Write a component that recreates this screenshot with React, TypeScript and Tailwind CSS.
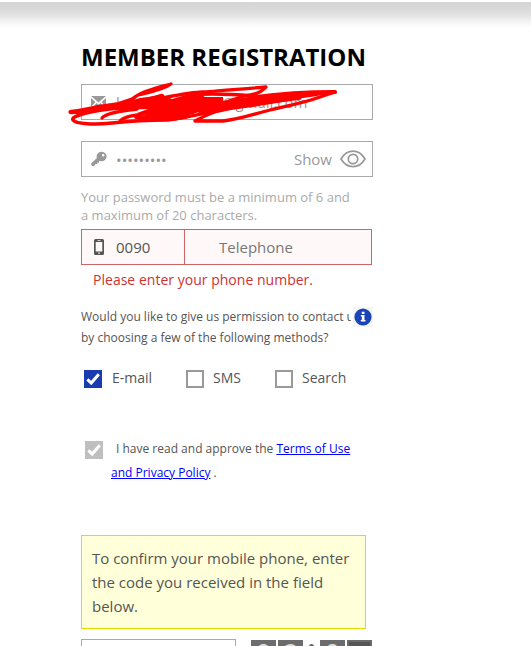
import { useState } from "react";
import type { ReactNode } from "react";

function CheckMark() {
  return (
    <svg width="18" height="18" viewBox="0 0 18 18" fill="none" className="block">
      <path d="M3.4 9.4 7.2 13 14.8 4.2" stroke="#fff" strokeWidth="3" />
    </svg>
  );
}

function KeyIcon() {
  return (
    <svg width="16" height="16" viewBox="0 0 16 16" className="block" fill="#999">
      <path
        fillRule="evenodd"
        d="M10.4 0.8a5 4.7 0 1 1-1.2 9.2L8 10.1v1.6H6.3v1.4H4.7L3.6 14.6a2 2 0 0 1-3-2.6L5.9 7A5 4.7 0 0 1 10.4.8Zm1.7 2.1a1.3 1.3 0 1 0 .1 2.6 1.3 1.3 0 0 0-.1-2.6Z"
      />
    </svg>
  );
}

function PhoneIcon() {
  return (
    <svg width="10" height="16" viewBox="0 0 10 16" className="block">
      <path
        fill="#555"
        fillRule="evenodd"
        d="M1.5 0h7A1.5 1.5 0 0 1 10 1.5v13A1.5 1.5 0 0 1 8.5 16h-7A1.5 1.5 0 0 1 0 14.5v-13A1.5 1.5 0 0 1 1.5 0ZM1.7 3v9.5h6.6V3ZM3.5 1.2v.8h3v-.8ZM4.2 13.5v1.3h1.6v-1.3Z"
      />
    </svg>
  );
}

function EyeIcon() {
  return (
    <svg width="26" height="18" viewBox="0 0 26 18" fill="none" stroke="#999" strokeWidth="1.7" className="block">
      <path d="M1 9C4 4 8 1.2 13 1.2S22 4 25 9c-3 5-7 7.6-12 7.6S4 14 1 9Z" />
      <circle cx="13" cy="9" r="4.7" />
    </svg>
  );
}

// Red marker strokes drawn over the e-mail row
function Scribble() {
  return (
    <svg
      className="pointer-events-none absolute -top-[5px] -left-[15px]"
      width="290"
      height="48"
      viewBox="67 80 290 48"
      fill="none"
      stroke="red"
      strokeWidth="3.3"
      strokeLinecap="round"
      strokeLinejoin="round"
    >
      <path
        fill="red"
        stroke="none"
        d="M106 110 122 103 140 98 163 95 172 99 196 92 205 97 223 97 224 107 205 110 193 114 174 119 150 117 137 113 148 109 125 110Z"
      />
      <path d="M70 112 96 107 117 104 132 99C142 91 156 88 171 84C163 90 150 92 138 95L130 101" />
      <path d="M71 112C88 112 103 108 116 107S143 101 162 96" strokeWidth="4.5" />
      <path d="M122 108C92 110 70 116 73 120S94 125 112 123S148 120 168 120L186 117" strokeWidth="3.6" />
      <path d="M102 118C107 112 124 111 137 109" />
      <path d="M120 121C125 116 132 116 142 114L160 110" />
      <path d="M136 117 174 118" strokeWidth="4" />
      <path d="M162 98C178 95 194 92 202 92S240 89 266 87C262 92 254 95 244 96L226 102" />
      <path d="M190 95C210 93 230 94 253 96C258 98 250 100 236 103L205 109" />
      <path d="M224 103C240 100 256 97 276 97L335 92C310 92 276 94 249 98" strokeWidth="4" />
      <path d="M335 92 312 94C280 102 262 104 240 107S212 112 195 121L223 121C240 119 254 114 270 110S304 103 320 97L335 92" />
      <path d="M200 111C224 105 262 101 316 94" strokeWidth="4.5" />
      <path d="M174 119C202 115 218 109 248 105L300 98" />
    </svg>
  );
}

function Option({
  label,
  checked,
  onToggle,
  className,
}: {
  label: string;
  checked: boolean;
  onToggle: () => void;
  className: string;
}) {
  return (
    <button onClick={onToggle} className={`flex items-start text-left ${className}`}>
      {checked ? (
        <span className="mt-[3px] mr-px size-[18px] bg-[#1a3cb0]">
          <CheckMark />
        </span>
      ) : (
        <span className="mt-[3px] size-[18px] border-2 border-[#999] bg-white" />
      )}
      <span className="mt-px ml-[9px] text-[14px] leading-[20px] text-[#555]">{label}</span>
    </button>
  );
}

function Tile({ children, dark }: { children: ReactNode; dark?: boolean }) {
  return (
    <div
      className={`h-[34px] w-[25px] shrink-0 text-center text-[26px] font-bold ${
        dark
          ? "bg-[#555] leading-[34px] text-[#777] shadow-[inset_0_0_0_2px_#6b6b6b]"
          : "bg-[#6c6c6c] leading-[27px] text-[#ddd]"
      }`}
    >
      {children}
    </div>
  );
}

export default function App() {
  const [methods, setMethods] = useState({ email: true, sms: false, search: false });
  const toggle = (key: keyof typeof methods) => setMethods((m) => ({ ...m, [key]: !m[key] }));

  return (
    <div className="h-[646px] w-[531px] overflow-hidden bg-white pt-[2px] font-['Open_Sans','Noto_Sans',sans-serif]">
      <div className="h-[26px] bg-[linear-gradient(to_bottom,#d5d5d5_0%,#d8d8d8_25%,#e2e2e2_50%,#f4f4f4_75%,#fff_100%)]" />

      <div className="ml-[81px] w-[292px]">
        <h1 className="mt-[12px] h-[44px] text-[24px] leading-[33px] font-bold whitespace-nowrap text-black">
          MEMBER REGISTRATION
        </h1>

        {/* E-mail */}
        <div className="relative flex h-[36px] items-center border border-[#aaa] text-[15px] text-[#999]">
          <svg width="15" height="12" viewBox="0 0 15 12" fill="#999" className="ml-[9px]">
            <path d="M0 0h15L7.5 6.5ZM0 2l4.500 4L0 11ZM15 2v9l-4.500-5ZM1 12l4.500-5 2 1.700 2-1.700L14 12Z" />
          </svg>
          <span className="ml-[10px] w-[53px]">l</span>
          <span className="w-[36px]">p</span>
          <span className="w-[17px]">l</span>
          <span>@gmail.com</span>
          <Scribble />
        </div>

        {/* Password */}
        <div className="mt-[21px] flex h-[36px] items-center border border-[#aaa] text-[#999]">
          <span className="ml-[9px]">
            <KeyIcon />
          </span>
          <span className="mt-[1px] ml-[9px] text-[15px] leading-[20px]">•••••••••</span>
          <span className="mr-[8px] ml-auto text-[15px]">Show</span>
          <span className="mr-[6px]">
            <EyeIcon />
          </span>
        </div>
        <p className="mt-[11px] h-[41px] text-[13px] leading-[18px] whitespace-nowrap text-[#aaa]">
          Your password must be a minimum of 6 and
          <br />a maximum of 20 characters.
        </p>

        {/* Phone */}
        <div className="flex h-[36px] w-[291px] items-center border border-[#c66] bg-[#fff8f8] text-[15px]">
          <div className="flex h-full w-[103px] items-center border-r border-[#c66] pl-[12px] text-[#555]">
            <PhoneIcon />
            <span className="ml-[12px]">0090</span>
          </div>
          <span className="ml-[34px] text-[#777]">Telephone</span>
        </div>
        <p className="mt-[5px] ml-[12px] text-[14px] leading-[20px] tracking-[0.02px] whitespace-nowrap text-[#c33]">
          Please enter your phone number.
        </p>

        {/* Contact permission */}
        <div className="mt-[16px] flex h-[42px] text-[12px] leading-[21px] text-[#555]">
          <p className="mr-[2px] w-[270px] shrink-0 overflow-hidden whitespace-nowrap">
            Would you like to give us permission to contact us
            <br />
            by choosing a few of the following methods?
          </p>
          <span className="mt-[1px] flex size-[20px] shrink-0 items-center justify-center bg-[#f5f5f5]">
            <svg width="18" height="18" viewBox="0 0 18 18">
              <circle cx="9" cy="9" r="8.6" fill="#1a44b8" />
              <path fill="#fff" d="M7.8 3.8h2.7v2.2H7.8ZM6.8 7h3.7v5h1v1.6h-4.7V12h1V8.6h-1Z" />
            </svg>
          </span>
        </div>

        <div className="mt-[19px] flex h-[22px]">
          <Option
            label="E-mail"
            checked={methods.email}
            onToggle={() => toggle("email")}
            className="ml-[3px] w-[102px]"
          />
          <Option label="SMS" checked={methods.sms} onToggle={() => toggle("sms")} className="w-[89px]" />
          <Option label="Search" checked={methods.search} onToggle={() => toggle("search")} className="w-[90px]" />
        </div>

        {/* Terms */}
        <div className="mt-[48px] flex h-[50px] text-[12px] leading-[24px] text-[#555]">
          <span className="mt-[4px] ml-[4px] size-[18px] shrink-0 bg-[#bfbfbf]">
            <CheckMark />
          </span>
          <p className="ml-[8px] whitespace-nowrap">
            <span className="ml-[5px]">I have read and approve the </span>
            <a className="text-[#00f] underline">Terms of Use</a>
            <br />
            <a className="text-[#00f] underline">and Privacy Policy</a> .
          </p>
        </div>

        {/* Confirmation code */}
        <div className="mt-[48px] h-[94px] w-[285px] border border-[#dd0] bg-[#ffffd9] px-[10px] py-[10px] text-[15px] leading-[24px] whitespace-nowrap text-[#555]">
          To confirm your mobile phone, enter
          <br />
          the code you received in the field
          <br />
          below.
        </div>
        <div className="mt-[10px] flex">
          <div className="h-[36px] w-[155px] shrink-0 border border-[#aaa] bg-white" />
          <div className="mt-[1px] ml-[15px] flex gap-[2px]">
            <Tile>0</Tile>
            <Tile>2</Tile>
            <div className="flex w-[13px] justify-center pt-[4px]">
              <span className="size-[5px] rounded-full bg-[#666]" />
            </div>
            <Tile>0</Tile>
            <Tile dark>0</Tile>
          </div>
        </div>
      </div>
    </div>
  );
}
